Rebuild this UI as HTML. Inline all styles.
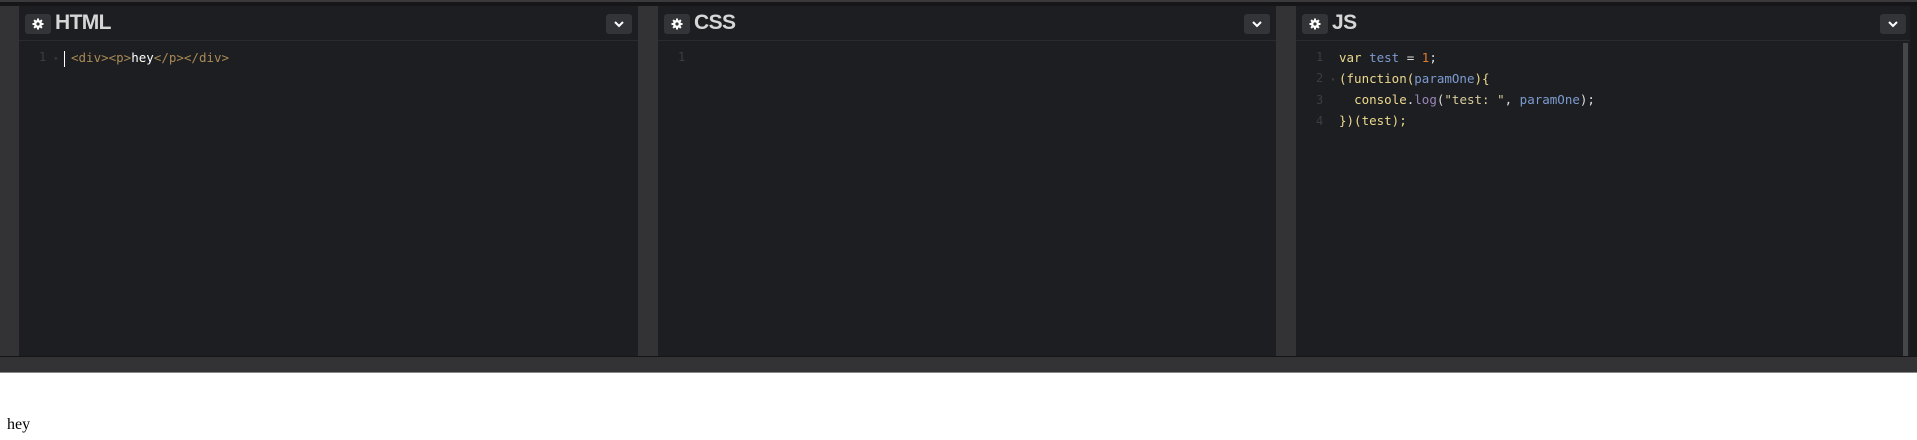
<!DOCTYPE html>
<html><head><style>
body{margin:0;width:1917px;height:440px;background:#fff;position:relative;overflow:hidden;font-family:"Liberation Sans",sans-serif}
.top{position:absolute;left:0;top:0;width:1917px;height:2px;background:#3a3a3c}
.top2{position:absolute;left:0;top:2px;width:1917px;height:4px;background:#161618}
.g{position:absolute;top:6px;height:350px;background:#333335}
.p{position:absolute;top:6px;height:350px;background:#1d1e21}
.hd{position:absolute;left:0;top:0;right:0;height:34px;border-bottom:1px solid #2a2b2e}
.gear{position:absolute;left:6px;top:8px;width:26px;height:20px;background:#333437;border-radius:3px}
.chev{position:absolute;top:8px;width:26px;height:20px;background:#333437;border-radius:3px}
.t{position:absolute;left:36px;top:5px;color:#d6d6d6;font-weight:bold;font-size:21px;letter-spacing:-0.6px}
.code{position:absolute;top:41px;font-family:"DejaVu Sans Mono","Liberation Mono",monospace;font-size:12.5px;line-height:21px;white-space:pre;color:#ddd}
.ln{position:absolute;top:41px;font-family:"DejaVu Sans Mono",monospace;font-size:12px;line-height:21px;color:#3c3d40;white-space:pre}
.tag{color:#a88a55}.y{color:#ecd98f}.b{color:#7c9bd0}.o{color:#e07b2e}.pu{color:#9a86b8}.s{color:#d8cc9c}
</style></head><body>
<div class="top"></div><div class="top2"></div>
<div class="g" style="left:0;width:19px"></div>
<div class="g" style="left:638px;width:20px"></div>
<div class="g" style="left:1276px;width:20px"></div>
<svg width="0" height="0" style="position:absolute"><defs><symbol id="gr" viewBox="0 0 26 20"><g fill="#fff"><circle cx="13" cy="10" r="4"/><rect x="12" y="4.5" width="2" height="11"/><rect x="7.5" y="9" width="11" height="2"/><rect x="12" y="4.5" width="2" height="11" transform="rotate(45 13 10)"/><rect x="12" y="4.5" width="2" height="11" transform="rotate(-45 13 10)"/></g><circle cx="13" cy="10" r="1.6" fill="#333437"/></symbol><symbol id="cv" viewBox="0 0 26 20"><path d="M9 8l4 4 4-4" stroke="#fff" stroke-width="2" fill="none"/></symbol></defs></svg>
<div class="p" style="left:19px;width:619px">
<div class="hd"><div class="gear"><svg width="26" height="20"><use href="#gr"/></svg></div><div class="t">HTML</div><div class="chev" style="left:587px"><svg width="26" height="20"><use href="#cv"/></svg></div></div>
<div class="ln" style="left:20px">1 <span style="font-size:8px">▾</span></div>
<div style="position:absolute;left:45px;top:45px;width:1px;height:16px;background:#fff"></div>
<div class="code" style="left:52px"><span class="tag">&lt;div&gt;&lt;p&gt;</span><span style="color:#fff">hey</span><span class="tag">&lt;/p&gt;&lt;/div&gt;</span></div>
</div>
<div class="p" style="left:658px;width:618px">
<div class="hd"><div class="gear"><svg width="26" height="20"><use href="#gr"/></svg></div><div class="t">CSS</div><div class="chev" style="left:586px"><svg width="26" height="20"><use href="#cv"/></svg></div></div>
<div class="ln" style="left:20px">1</div>
</div>
<div class="p" style="left:1296px;width:614px">
<div class="hd"><div class="gear"><svg width="26" height="20"><use href="#gr"/></svg></div><div class="t">JS</div><div class="chev" style="left:584px"><svg width="26" height="20"><use href="#cv"/></svg></div></div>
<div class="ln" style="left:20px">1
2 <span style="font-size:8px">▾</span>
3
4</div>
<div class="code" style="left:43px"><span class="y">var</span> <span class="b">test</span> = <span class="o">1</span>;
<span class="y">(function(</span><span class="b">paramOne</span><span class="y">){</span>
  <span class="y">console</span>.<span class="pu">log</span>(<span class="s">"test: "</span>, <span class="b">paramOne</span>);
<span class="y">})(test);</span></div>
<div style="position:absolute;left:607px;top:37px;width:5px;height:313px;background:#45464a"></div>
</div>
<div style="position:absolute;left:1910px;top:6px;width:7px;height:350px;background:#18191b"></div>
<div style="position:absolute;left:0;top:356px;width:1917px;height:16px;background:#333335;border-top:1px solid #151517"></div>
<div style="position:absolute;left:0;top:372px;width:1917px;height:1px;background:#888"></div>
<div style="position:absolute;left:7px;top:416px;font-family:'Liberation Serif',serif;font-size:16px;color:#000">hey</div>
</body></html>
